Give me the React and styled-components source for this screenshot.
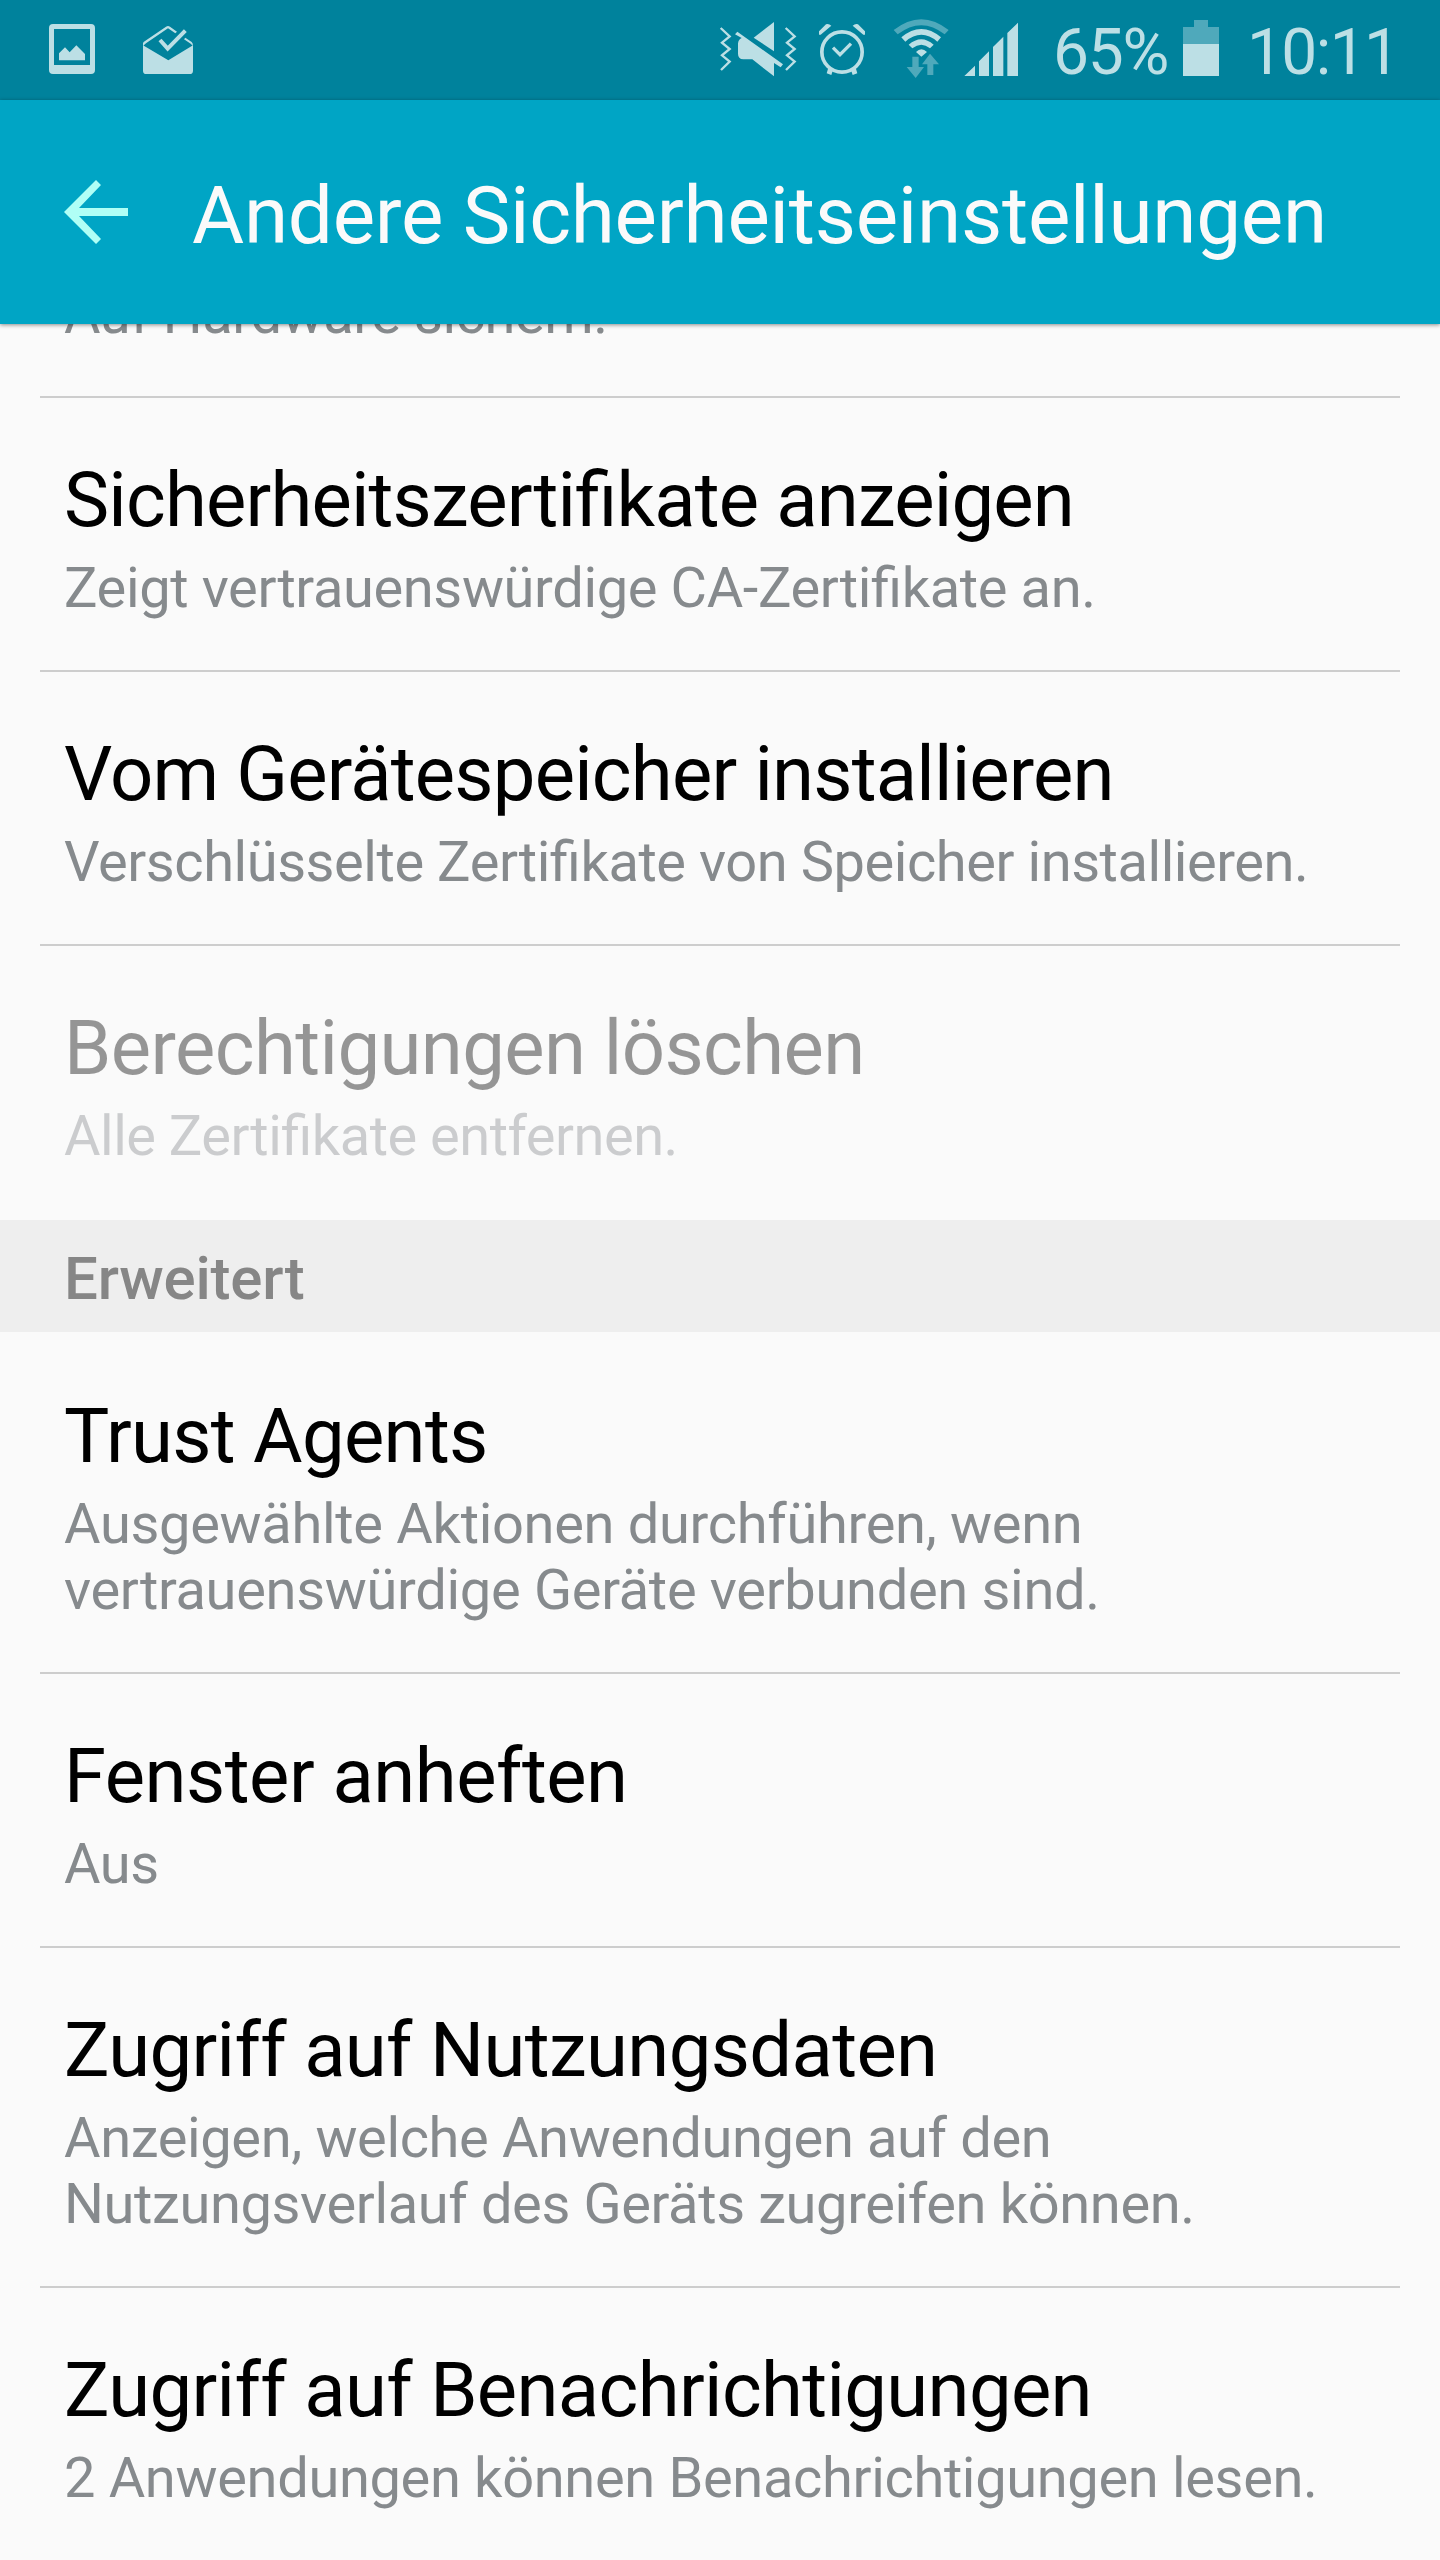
import styled, { createGlobalStyle } from "styled-components";

const GlobalStyle = createGlobalStyle`
 body {
  margin: 0;
  background: #fafafa;
  font-family: Roboto, sans-serif;
  font-feature-settings: "liga" 1;
 }
`
const Screen = styled.div`
 width: 1440px;
 height: 2560px;
 display: flex;
 flex-direction: column;
 overflow: hidden;
 background: #fafafa;
`
const StatusBar = styled.div`
 height: 100px;
 flex-shrink: 0;
 display: flex;
 padding-left: 49px;
 background: #00829c;
 color: #bcdfe5;
`
const Notifications = styled.div`
 display: flex;
 gap: 48px;
 margin-right: 526px;
`
const SystemIcons = styled.div`
 display: flex;
`
const StatusIcon = styled.svg`
 display: block;
 flex-shrink: 0;
 width: ${({ $width }) => $width}px;
 height: 100px;
 margin-left: ${({ $gap }) => $gap || 0}px;
 fill: currentColor;
`
const StatusText = styled.span`
 width: ${({ $width }) => $width}px;
 margin-left: ${({ $gap }) => $gap}px;
 font-size: 64px;
 line-height: 105px;
 letter-spacing: ${({ $tracking }) => $tracking}px;
 white-space: nowrap;
`
const Header = styled.header`
 height: 224px;
 flex-shrink: 0;
 display: flex;
 align-items: flex-start;
 padding-left: 64px;
 background: #00a5c5;
 box-shadow: 0 1px 4px rgba(0, 0, 0, 0.45);
 z-index: 1;
`
const BackArrow = styled.svg`
 width: 64px;
 height: 64px;
 margin: 80px 64px 0 0;
 fill: #b0fff6;
`
const HeaderTitle = styled.h1`
 margin: 69px 0 0;
 font-size: 80px;
 font-weight: 400;
 line-height: 94px;
 letter-spacing: -0.26px;
 color: #fafafa;
 white-space: nowrap;
`
/* scrolled so that the first row is half hidden by the header */
const List = styled.main`
 display: flex;
 flex-direction: column;
 margin-top: -43px;
`
const Item = styled.div`
 flex-shrink: 0;
 margin: 0 40px;
 padding: ${({ $scrolled }) => ($scrolled ? 0 : 57)}px 24px 49px;
 border-bottom: 2px solid ${({ $last }) => ($last ? "transparent" : "#cdcdcd")};
 opacity: ${({ $disabled }) => ($disabled ? 0.4 : 1)};
`
const ItemTitle = styled.div`
 font-size: 76px;
 line-height: 90px;
 margin-bottom: 10px;
 letter-spacing: ${({ $tracking }) => $tracking}px;
 color: #000;
 white-space: nowrap;
`
const ItemSummary = styled.div`
 font-size: 56px;
 line-height: 66px;
 letter-spacing: ${({ $tracking }) => $tracking}px;
 color: #868a8d;
 white-space: pre-line;
`
const Section = styled.div`
 height: 112px;
 flex-shrink: 0;
 margin-bottom: 2px;
 padding-left: 64px;
 background: #eeeeee;
 font-size: 60px;
 font-weight: 500;
 line-height: 117px;
 letter-spacing: -0.2px;
 color: #868686;
`

// tracking: [title, summary] letter spacing in px
const storageItems = [
  { summary: "Auf Hardware sichern.", tracking: [0, -0.42] },
  { title: "Sicherheitszertifikate anzeigen", summary: "Zeigt vertrauenswürdige CA-Zertifikate an.", tracking: [-0.82, -0.37] },
  { title: "Vom Gerätespeicher installieren", summary: "Verschlüsselte Zertifikate von Speicher installieren.", tracking: [-0.8, -0.44] },
  { title: "Berechtigungen löschen", summary: "Alle Zertifikate entfernen.", tracking: [-0.57, -0.5], disabled: true },
]

const advancedItems = [
  { title: "Trust Agents", summary: "Ausgewählte Aktionen durchführen, wenn\nvertrauenswürdige Geräte verbunden sind.", tracking: [-0.68, -0.31] },
  { title: "Fenster anheften", summary: "Aus", tracking: [-0.5, -0.4] },
  { title: "Zugriff auf Nutzungsdaten", summary: "Anzeigen, welche Anwendungen auf den\nNutzungsverlauf des Geräts zugreifen können.", tracking: [-0.65, -0.37] },
  { title: "Zugriff auf Benachrichtigungen", summary: "2 Anwendungen können Benachrichtigungen lesen.", tracking: [-0.64, -0.34] },
]

function PictureIcon() {
  return (
    <StatusIcon $width={46} viewBox="147 0 138 300">
      <path fillRule="evenodd" d="M159 72H273Q285 72 285 84V210Q285 222 273 222H159Q147 222 147 210V84Q147 72 159 72ZM162 87V195H270V87Z" />
      <path d="M177 181V160L195 142L209 157L229 136L255 162V181Z" />
    </StatusIcon>
  )
}

function InboxIcon() {
  return (
    <StatusIcon $width={50} viewBox="429 0 150 300">
      <path d="M429 136L505 181L579 136V212Q579 222 569 222H439Q429 222 429 212Z" />
      <path d="M429 138V130Q430 126 434 124L498 80Q504 76 510 80L531 95L526 100L504 85L438 130Z" />
      <path d="M556 113L575 126Q579 129 579 138L572 131L552 118Z" />
      <path d="M480 120L503 146L556 92" fill="none" stroke="currentColor" strokeWidth="12" />
    </StatusIcon>
  )
}

function MuteIcon() {
  return (
    <StatusIcon $width={79} viewBox="57 0 237 300">
      <path d="M222 66V154L161 113Z" />
      <path d="M112 95L249 193L242 202L222 189V229L157 178H130Q114 177 114 161V130Q114 123 120 117L125 114L105 103Z" />
      <path
        d="M62 84L89 109L66 128L89 147L66 166L89 185L63 210M257 84L284 109L261 128L284 147L261 166L284 185L258 210"
        fill="none"
        stroke="currentColor"
        strokeWidth="7"
      />
    </StatusIcon>
  )
}

function AlarmIcon() {
  return (
    <StatusIcon $gap={20} $width={48} viewBox="354 0 144 300">
      <circle cx="426" cy="156" r="60.5" fill="none" stroke="currentColor" strokeWidth="11" />
      <path d="M399 143L420 164L453 131" fill="none" stroke="currentColor" strokeWidth="10" />
      <path d="M357 104V94L378 73Q386 70 394 77L362 104ZM495 104V94L474 73Q466 70 458 77L490 104Z" />
      <path d="M385 203L399 210L394 225L380 220ZM467 203L453 210L458 225L472 220Z" />
    </StatusIcon>
  )
}

function WifiIcon() {
  return (
    <StatusIcon $gap={27} $width={56} viewBox="579 0 168 300">
      <path d="M581 90Q664 25 746 90L734 103Q664 48 593 103Z" fill="#4fa9bb" />
      <path d="M604 112Q664 62 723 112L712 125Q664 84 616 125Z" />
      <path d="M626 134Q664 101 701 134L690 145Q664 123 637 145Z" />
      <path d="M648 156Q664 139 681 156L664 170Z" />
      <path d="M637 170H656V201H672L647 234L620 201H637ZM682 225V193H666L690 161L717 193H700V225Z" fill="#4fa9bb" />
    </StatusIcon>
  )
}

function SignalIcon() {
  return (
    <StatusIcon $gap={15} $width={55} viewBox="792 0 165 300">
      <path d="M793 228L825 197V228ZM837 228V184L867 154V228ZM879 228V141L910 110V228ZM922 228V99L954 68V228Z" />
    </StatusIcon>
  )
}

function BatteryIcon() {
  return (
    <StatusIcon $gap={11} $width={36} viewBox="0 0 36 100">
      <path d="M0 44V27H11V20H25V27H36V44Z" fill="#4fa9bb" />
      <path d="M0 44H36V76H0Z" />
    </StatusIcon>
  )
}

function Items({ items }) {
  return items.map((item, i) => (
    <Item key={item.summary} $scrolled={!item.title} $disabled={item.disabled} $last={i === items.length - 1}>
      {item.title && <ItemTitle $tracking={item.tracking[0]}>{item.title}</ItemTitle>}
      <ItemSummary $tracking={item.tracking[1]}>{item.summary}</ItemSummary>
    </Item>
  ))
}

export default function App() {
  return (
    <Screen>
      <GlobalStyle />
      <StatusBar>
        <Notifications>
          <PictureIcon />
          <InboxIcon />
        </Notifications>
        <SystemIcons>
          <MuteIcon />
          <AlarmIcon />
          <WifiIcon />
          <SignalIcon />
          <StatusText $gap={34} $width={119} $tracking={-1.2}>65%</StatusText>
          <BatteryIcon />
          <StatusText $gap={28} $width={147} $tracking={-1.6}>10:11</StatusText>
        </SystemIcons>
      </StatusBar>
      <Header>
        <BackArrow viewBox="0 0 64 64">
          <path d="M32 0L37 5L15 28H64V36H15L37 59L32 64L0 32Z" />
        </BackArrow>
        <HeaderTitle>Andere Sicherheitseinstellungen</HeaderTitle>
      </Header>
      <List>
        <Items items={storageItems} />
        <Section>Erweitert</Section>
        <Items items={advancedItems} />
      </List>
    </Screen>
  )
}
